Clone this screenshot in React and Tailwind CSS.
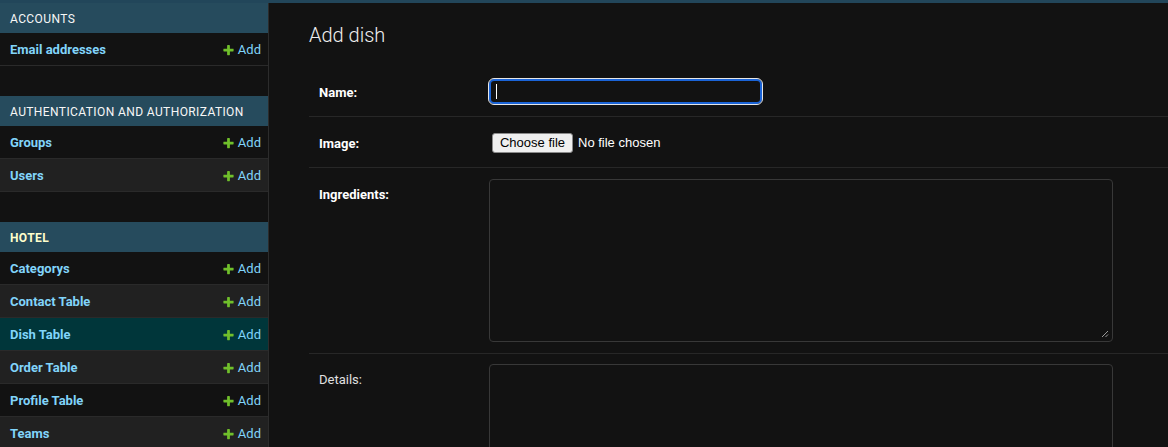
import React from "react";

const PlusIcon = () => (
  <svg width="13" height="13" viewBox="0 0 1792 1792" className="shrink-0">
    <path
      fill="#70bf2b"
      d="M1600 736v192q0 40-28 68t-68 28h-416v416q0 40-28 68t-68 28h-192q-40 0-68-28t-28-68v-416h-416q-40 0-68-28t-28-68v-192q0-40 28-68t68-28h416v-416q0-40 28-68t68-28h192q40 0 68 28t28 68v416h416q40 0 68 28t28 68z"
    />
  </svg>
);

const SideRow = ({ name, tone }) => {
  const bg =
    tone === "sel" ? "bg-[#00363a]" : tone === "light" ? "bg-[#212121]" : "bg-[#121212]";
  return (
    <div
      className={`flex h-[33px] items-center justify-between border-b border-[#2a2a2a] pl-[10px] pr-[7px] pt-[2px] ${bg}`}
    >
      <span className="text-[13px] font-bold text-[#81d4fa]">{name}</span>
      <span className="flex items-center text-[13px] text-[#81d4fa]">
        <span className="mr-[3px] flex w-[13px] items-center">
          <PlusIcon />
        </span>
        Add
      </span>
    </div>
  );
};

const Caption = ({ children, current }) => (
  <div
    className={`flex h-[30px] items-center bg-[#264b5d] pl-[10px] pt-[2px] text-[12px] uppercase tracking-[0.4px] ${
      current ? "font-bold text-[#ffffcc]" : "text-[#f7f7f7]"
    }`}
  >
    {children}
  </div>
);

const Module = ({ title, current, rows }) => (
  <div className="mb-[30px]">
    <Caption current={current}>{title}</Caption>
    {rows.map((r) => (
      <SideRow key={r[0]} name={r[0]} tone={r[1]} />
    ))}
  </div>
);

const Resizer = () => (
  <svg width="8" height="8" viewBox="0 0 8 8" className="absolute bottom-[3px] right-[3px]">
    <path d="M7 1 L1 7 M7 4.5 L4.5 7" stroke="#9a9a9a" strokeWidth="1" />
  </svg>
);

export default function App() {
  return (
    <div
      className="h-[447px] w-full overflow-hidden bg-[#121212] text-[#eeeeee]"
      style={{ fontFamily: "Roboto, 'Noto Sans', sans-serif" }}
    >
      <div className="h-[3px] w-full bg-[#22465a]" />
      <div className="flex">
        <aside className="w-[269px] shrink-0 border-r border-[#2c2c2c]">
          <Module title="Accounts" rows={[["Email addresses", "dark"]]} />
          <Module
            title="Authentication and Authorization"
            rows={[
              ["Groups", "dark"],
              ["Users", "light"],
            ]}
          />
          <Module
            title="Hotel"
            current
            rows={[
              ["Categorys", "dark"],
              ["Contact Table", "light"],
              ["Dish Table", "sel"],
              ["Order Table", "light"],
              ["Profile Table", "dark"],
              ["Teams", "light"],
            ]}
          />
        </aside>
        <main className="min-w-0 flex-1 pl-[40px] pt-[20px]">
          <h1 className="mb-[19px] h-[24px] text-[20px] font-light leading-6 text-[#eeeeee]">
            Add dish
          </h1>
          <div>
            {/* Name */}
            <div className="flex border-b border-[#272727] py-[10px] pl-[10px]">
              <label className="w-[170px] shrink-0 pt-[9px] text-[13px] font-bold leading-4 text-[#ffffff]">
                Name:
              </label>
              <div className="flex h-[30px] items-center">
                <div className="flex h-[25px] w-[273px] items-center rounded-[5px] border-2 border-[#1a63d6] bg-[#121212] pl-[5px] outline outline-1 outline-[#e6e6e6]">
                  <span className="h-[15px] w-px bg-[#ffffff]" />
                </div>
              </div>
            </div>
            {/* Image */}
            <div className="flex border-b border-[#272727] py-[10px] pl-[10px]">
              <label className="w-[170px] shrink-0 pt-[9px] text-[13px] font-bold leading-4 text-[#ffffff]">
                Image:
              </label>
              <div
                className="flex h-[30px] items-center pt-[1px] text-[13px]"
                style={{ fontFamily: "'Liberation Sans', Arial, sans-serif" }}
              >
                <span className="ml-[3px] flex h-[20px] w-[81px] items-center justify-center rounded-[3px] border border-[#8a8a8a] bg-[#efefef] pt-[1px] text-[#000000]">
                  Choose file
                </span>
                <span className="ml-[5px] pt-[1px] text-[#ffffff]">No file chosen</span>
              </div>
            </div>
            {/* Ingredients */}
            <div className="flex border-b border-[#272727] pb-[11px] pl-[10px] pt-[11px]">
              <label className="w-[170px] shrink-0 pt-[8px] text-[13px] font-bold leading-4 text-[#ffffff]">
                Ingredients:
              </label>
              <div className="relative h-[163px] w-[624px] shrink-0 rounded-[4px] border border-[#383838] bg-[#121212]">
                <Resizer />
              </div>
            </div>
            {/* Details */}
            <div className="flex pl-[10px] pt-[10px]">
              <label className="w-[170px] shrink-0 pt-[8px] text-[13px] leading-4 text-[#e0e0e0]">
                Details:
              </label>
              <div className="h-[163px] w-[624px] shrink-0 rounded-[4px] border border-[#383838] bg-[#121212]" />
            </div>
          </div>
        </main>
      </div>
    </div>
  );
}
